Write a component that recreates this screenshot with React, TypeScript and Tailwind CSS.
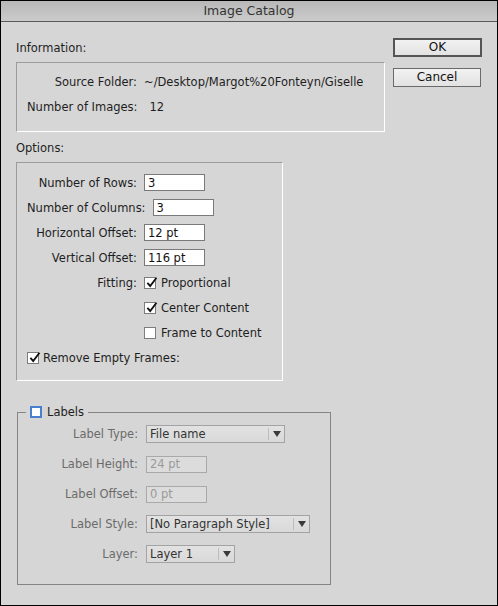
import React from 'react';

const font = { fontFamily: '"DejaVu Sans", "Liberation Sans", sans-serif' };

function Check({ checked, focus }: { checked?: boolean; focus?: boolean }) {
  return (
    <div
      className={
        'relative h-[12px] w-[12px] shrink-0 bg-white ' +
        (focus ? 'border-2 border-[#4a7fd0]' : 'border border-[#7d7d7d]')
      }
    >
      {checked && (
        <svg viewBox="0 0 12 12" className="absolute left-[0px] top-[-2px] h-[13px] w-[13px]">
          <path d="M2.2 6.4 L4.8 9.2 L10.6 1.6" fill="none" stroke="#111" strokeWidth="1.7" />
        </svg>
      )}
    </div>
  );
}

function TextBox({ value }: { value: string }) {
  return (
    <div className="ml-[7px] flex h-[17px] w-[61px] items-center border border-[#7a7a7a] bg-white pl-[3px] text-[#111]">
      {value}
    </div>
  );
}

function OptRow({ label, value }: { label: string; value: string }) {
  return (
    <div className="flex h-[17px] items-center">
      <span className="min-w-[110px] text-right">{label}</span>
      <TextBox value={value} />
    </div>
  );
}

function FitRow({ label, text, checked }: { label?: string; text: string; checked?: boolean }) {
  return (
    <div className="flex h-[17px] items-center">
      <span className="min-w-[110px] text-right">{label}</span>
      <div className="ml-[7px] flex items-center gap-[5px]">
        <Check checked={checked} />
        <span>{text}</span>
      </div>
    </div>
  );
}

function Dropdown({ value, width }: { value: string; width: string }) {
  return (
    <div
      className={
        'flex h-[18px] items-center border border-[#a3a3a3] bg-gradient-to-b from-[#e2e2e2] to-[#d9d9d9] text-[#333] ' +
        width
      }
    >
      <span className="flex-1 pl-[3px]">{value}</span>
      <div className="h-[12px] w-px bg-[#bdbdbd]" />
      <div className="flex w-[15px] justify-center">
        <svg viewBox="0 0 8 6" className="h-[6px] w-[8px]">
          <path d="M0 0 L8 0 L4 6 Z" fill="#3a3a3a" />
        </svg>
      </div>
    </div>
  );
}

function LabelRow({ label, children }: { label: string; children: React.ReactNode }) {
  return (
    <div className="flex h-[18px] items-center">
      <span className="w-[120px] text-right text-[#6b6b6b]">{label}</span>
      <div className="ml-[8px]">{children}</div>
    </div>
  );
}

function Disabled({ value }: { value: string }) {
  return (
    <div className="flex h-[17px] w-[61px] items-center border border-[#a9a9a9] bg-[#dcdcdc] pl-[3px] text-[#9a9a9a]">
      {value}
    </div>
  );
}

export default function App() {
  return (
    <div
      className="h-[606px] w-[498px] overflow-hidden whitespace-nowrap border border-black bg-[#d6d6d6] text-[11.5px] leading-[16px] text-[#1e1e1e]"
      style={font}
    >
      <div className="flex h-[21px] items-center justify-center border-b border-[#5a5a5a] bg-gradient-to-b from-[#b8b8b8] to-[#cbcbcb] text-[12.5px] text-[#333]">
        Image Catalog
      </div>
      <div className="flex gap-[8px] pl-[15px]">
        <div className="flex w-[369px] flex-col">
          <div className="mt-[18px] h-[16px]">Information:</div>
          <div className="mt-[6px] flex flex-col gap-[9px] border border-b-white border-l-[#9b9b9b] border-r-white border-t-[#9b9b9b] pb-[16px] pl-[10px] pt-[11px]">
            <div className="flex h-[16px] items-center">
              <span className="min-w-[110px] text-right">Source Folder:</span>
              <span className="ml-[7px]">~/Desktop/Margot%20Fonteyn/Giselle</span>
            </div>
            <div className="flex h-[16px] items-center">
              <span className="min-w-[110px] text-right">Number of Images:</span>
              <span className="ml-[12px]">12</span>
            </div>
          </div>
          <div className="mt-[8px] h-[16px]">Options:</div>
          <div className="mt-[6px] flex w-[267px] flex-col gap-[8px] border border-b-white border-l-[#9b9b9b] border-r-white border-t-[#9b9b9b] pb-[14px] pl-[10px] pt-[11px]">
            <OptRow label="Number of Rows:" value="3" />
            <OptRow label="Number of Columns:" value="3" />
            <OptRow label="Horizontal Offset:" value="12 pt" />
            <OptRow label="Vertical Offset:" value="116 pt" />
            <FitRow label="Fitting:" text="Proportional" checked />
            <FitRow text="Center Content" checked />
            <FitRow text="Frame to Content" />
            <div className="flex h-[17px] items-center gap-[4px]">
              <Check checked />
              <span>Remove Empty Frames:</span>
            </div>
          </div>
          <fieldset className="ml-px mt-[23px] flex w-[314px] flex-col gap-[12px] border border-[#858585] pb-[21px] pt-[5px]">
            <legend className="ml-[8px] flex h-[16px] items-center gap-[5px] px-[4px]">
              <Check focus />
              <span>Labels</span>
            </legend>
            <LabelRow label="Label Type:">
              <Dropdown value="File name" width="w-[139px]" />
            </LabelRow>
            <LabelRow label="Label Height:">
              <Disabled value="24 pt" />
            </LabelRow>
            <LabelRow label="Label Offset:">
              <Disabled value="0 pt" />
            </LabelRow>
            <LabelRow label="Label Style:">
              <Dropdown value="[No Paragraph Style]" width="w-[164px]" />
            </LabelRow>
            <LabelRow label="Layer:">
              <Dropdown value="Layer 1" width="w-[89px]" />
            </LabelRow>
          </fieldset>
        </div>
        <div className="flex w-[89px] flex-col">
          <button className="mt-[16px] h-[19px] w-[89px] border-2 border-[#555] bg-gradient-to-b from-[#f2f2f2] to-[#e2e2e2] text-[12px] leading-[15px] text-[#111]">
            OK
          </button>
          <button className="mt-[11px] h-[19px] w-[88px] border border-[#6a6a6a] bg-gradient-to-b from-[#f2f2f2] to-[#e2e2e2] text-[12px] leading-[17px] text-[#111]">
            Cancel
          </button>
        </div>
      </div>
    </div>
  );
}
